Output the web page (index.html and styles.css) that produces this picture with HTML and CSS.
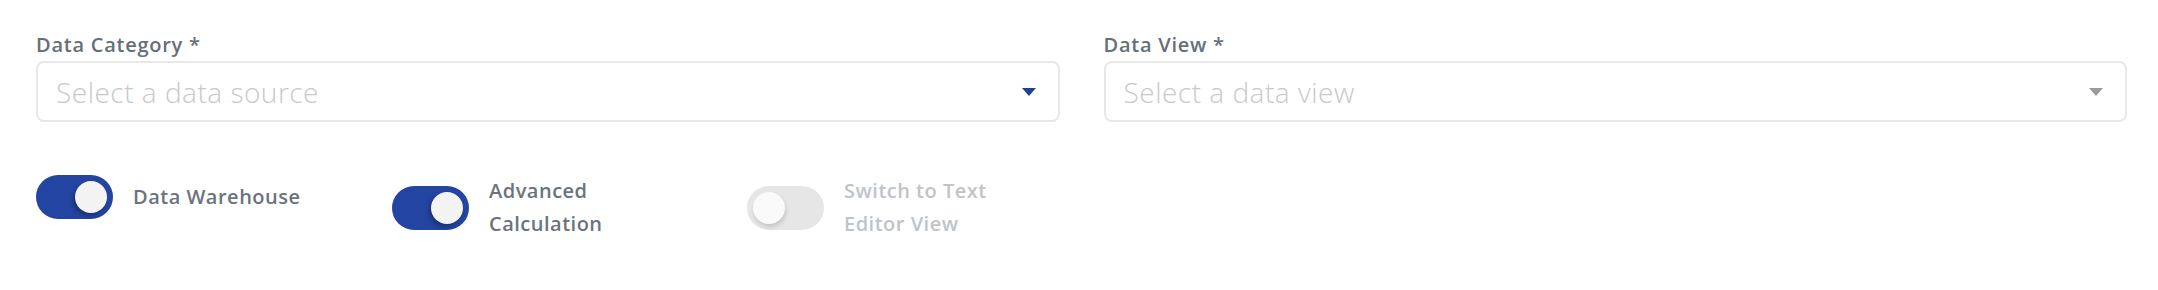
FILE: index.html
```html
<!DOCTYPE html>
<html lang="en">
<head>
<meta charset="utf-8">
<title>Data source settings</title>
<link rel="stylesheet" href="styles.css">
</head>
<body>
<div class="panel">
  <div class="fields">
    <div class="field">
      <div class="field-label">Data Category *</div>
      <div class="select">
        <span class="placeholder">Select a data source</span>
        <svg class="caret caret-active" width="14" height="8" viewBox="0 0 14 8"><polygon points="0,0 14,0 7,8"/></svg>
      </div>
    </div>
    <div class="field">
      <div class="field-label">Data View *</div>
      <div class="select">
        <span class="placeholder">Select a data view</span>
        <svg class="caret caret-muted" width="14" height="8" viewBox="0 0 14 8"><polygon points="0,0 14,0 7,8"/></svg>
      </div>
    </div>
  </div>
  <div class="toggles">
    <div class="toggle">
      <span class="track on"><span class="knob"></span></span>
      <span class="toggle-text">Data Warehouse</span>
    </div>
    <div class="toggle">
      <span class="track on"><span class="knob"></span></span>
      <span class="toggle-text">Advanced Calculation</span>
    </div>
    <div class="toggle disabled">
      <span class="track off"><span class="knob"></span></span>
      <span class="toggle-text">Switch to Text Editor View</span>
    </div>
  </div>
</div>
</body>
</html>
```

FILE: styles.css
```css
html, body {
  margin: 0;
  padding: 0;
  background: #ffffff;
}

body {
  font-family: "Open Sans", "Noto Sans", sans-serif;
}

.panel {
  padding: 33px 31px 0 36px;
}

.fields {
  display: grid;
  grid-template-columns: 1fr 1fr;
  column-gap: 44px;
}

.field-label {
  font-size: 20px;
  line-height: 24px;
  font-weight: 600;
  letter-spacing: 0.75px;
  color: #666f79;
  margin-bottom: 4px;
}

.select {
  box-sizing: border-box;
  height: 61px;
  border: 2px solid #e8e8e8;
  border-radius: 8px;
  display: flex;
  align-items: center;
  justify-content: space-between;
  padding: 0 22px 0 18px;
}

.placeholder {
  font-size: 28px;
  font-weight: 300;
  letter-spacing: 0.5px;
  color: #c9c9c9;
}

.caret-active {
  fill: #1f3f9b;
}

.caret-muted {
  fill: #9b9b9b;
}

.toggles {
  margin-top: 53px;
  display: grid;
  grid-template-columns: 356px 355px 356px;
  align-items: start;
}

.toggle {
  display: flex;
  align-items: center;
  gap: 20px;
}

.track {
  box-sizing: border-box;
  flex: none;
  width: 77px;
  height: 44px;
  border-radius: 22px;
  padding: 6px;
  display: flex;
  align-items: center;
}

.track.on {
  background: #2344a0;
  justify-content: flex-end;
}

.track.off {
  background: #e6e6e6;
  justify-content: flex-start;
}

.knob {
  width: 32px;
  height: 32px;
  border-radius: 50%;
  background: #f3f3f3;
  box-shadow: -2px 3px 4px rgba(0, 0, 0, 0.28);
}

.track.off .knob {
  background: #fafafa;
  box-shadow: 1px 3px 4px rgba(0, 0, 0, 0.14);
}

.toggle-text {
  font-size: 20px;
  line-height: 32.5px;
  font-weight: 600;
  letter-spacing: 0.5px;
  color: #6b737d;
  max-width: 180px;
}

.toggle.disabled .toggle-text {
  color: #c0c4c9;
}
```
